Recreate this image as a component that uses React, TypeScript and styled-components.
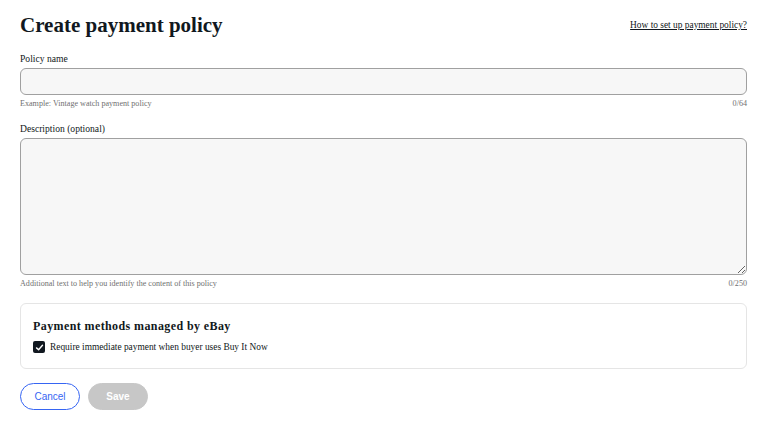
import { FC } from 'react'
import styled, { createGlobalStyle } from 'styled-components'

const GlobalStyle = createGlobalStyle`
    html, body {
        margin: 0;
        padding: 0;
        background: #ffffff;
    }
    body {
        font-family: 'Liberation Serif', 'Times New Roman', serif;
        color: #111820;
    }
    * {
        box-sizing: border-box;
    }
`
const Page = styled.div`
    width: 760px;
    padding: 11px 13px 0 20px;
`
const Header = styled.div`
    display: flex;
    justify-content: space-between;
    align-items: center;
    height: 28px;
    margin-bottom: 13px;
`
const Title = styled.h1`
    margin: 0;
    font-size: 21px;
    font-weight: 700;
    line-height: 28px;
`
const HelpLink = styled.a`
    color: #111820;
    font-size: 9.4px;
    text-decoration: underline;
`
const Field = styled.div`
    display: flex;
    flex-direction: column;
    margin-bottom: 13px;
`
const Label = styled.label`
    font-size: 9.6px;
    line-height: 14px;
    margin-bottom: 2px;
`
const TextInput = styled.input`
    width: 100%;
    height: 27px;
    border: 1px solid #a0a0a0;
    border-radius: 6px;
    background: #f7f7f7;
    padding: 0 10px;
    font-family: inherit;
    outline: none;
`
const TextArea = styled.textarea`
    width: 100%;
    height: 137px;
    border: 1px solid #a0a0a0;
    border-radius: 6px;
    background: #f7f7f7;
    padding: 8px 10px;
    font-family: inherit;
    outline: none;
    display: block;
`
const HintRow = styled.div`
    display: flex;
    justify-content: space-between;
    margin-top: 3px;
    font-size: 8.1px;
    line-height: 11px;
    color: #707070;
`
const MethodsCard = styled.section`
    border: 1px solid #e5e5e5;
    border-radius: 6px;
    padding: 15px 12px 14px;
    margin-top: 14px;
`
const CardTitle = styled.h2`
    margin: 0 0 7px;
    font-size: 12px;
    font-weight: 700;
    line-height: 14px;
    letter-spacing: 0.4px;
`
const CheckRow = styled.label`
    display: flex;
    align-items: center;
    gap: 5px;
    font-size: 9.4px;
    line-height: 14px;
`
const CheckBox = styled.span`
    width: 12px;
    height: 12px;
    border-radius: 2px;
    background: #111820;
    display: flex;
    align-items: center;
    justify-content: center;
`
const Actions = styled.div`
    display: flex;
    gap: 8px;
    margin-top: 14px;
`
const Button = styled.button<{ $primary?: boolean }>`
    width: 60px;
    height: 27px;
    border-radius: 14px;
    font-family: 'Liberation Sans', Arial, sans-serif;
    font-size: 10px;
    cursor: pointer;
    border: 1px solid ${p => p.$primary ? '#c7c7c7' : '#3665f3'};
    background: ${p => p.$primary ? '#c7c7c7' : '#ffffff'};
    color: ${p => p.$primary ? '#ffffff' : '#3665f3'};
    font-weight: ${p => p.$primary ? 700 : 400};
`

const App: FC = () => {
    return (
        <Page>
            <GlobalStyle />
            <Header>
                <Title>Create payment policy</Title>
                <HelpLink href="#">How to set up payment policy?</HelpLink>
            </Header>
            <Field>
                <Label>Policy name</Label>
                <TextInput />
                <HintRow>
                    <span>Example: Vintage watch payment policy</span>
                    <span>0/64</span>
                </HintRow>
            </Field>
            <Field>
                <Label>Description (optional)</Label>
                <TextArea />
                <HintRow>
                    <span>Additional text to help you identify the content of this policy</span>
                    <span>0/250</span>
                </HintRow>
            </Field>
            <MethodsCard>
                <CardTitle>Payment methods managed by eBay</CardTitle>
                <CheckRow>
                    <CheckBox>
                        <svg width="9" height="9" viewBox="0 0 12 12">
                            <path d="M2 6.5 L4.8 9 L10 3" fill="none" stroke="#ffffff" strokeWidth="1.8" strokeLinecap="round" strokeLinejoin="round" />
                        </svg>
                    </CheckBox>
                    Require immediate payment when buyer uses Buy It Now
                </CheckRow>
            </MethodsCard>
            <Actions>
                <Button>Cancel</Button>
                <Button $primary disabled>Save</Button>
            </Actions>
        </Page>
    )
}

export default App
